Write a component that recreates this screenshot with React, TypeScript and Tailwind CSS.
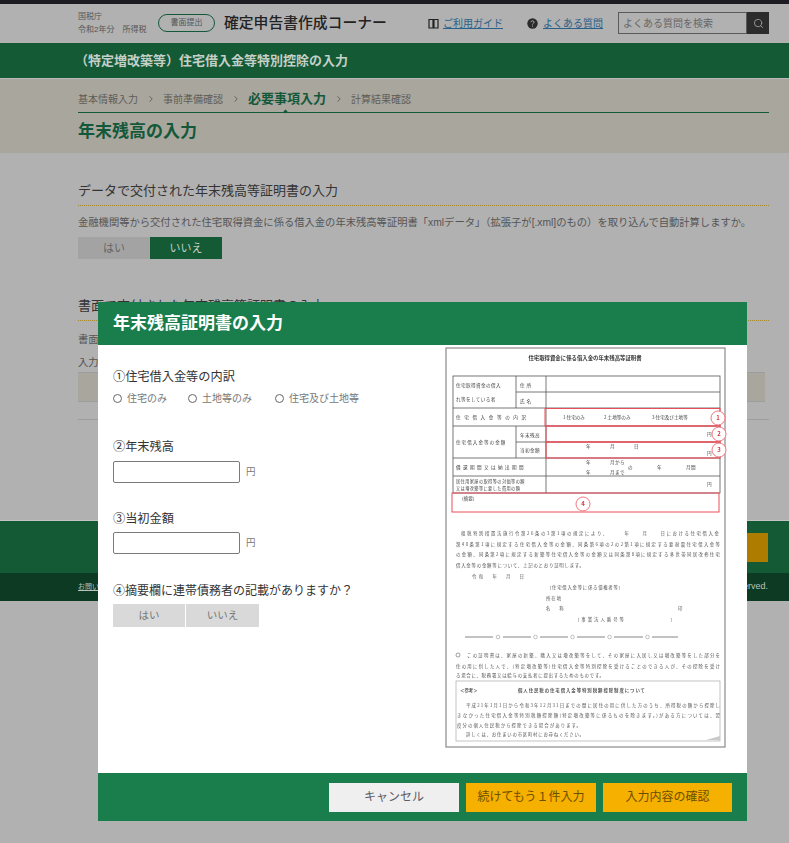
import React from 'react';
import { Search, ChevronRight } from 'lucide-react';

const Crumb = ({ label, active }: { label: string; active?: boolean }) => (
  <span className={active ? 'text-[13px] font-bold text-[#14583a]' : 'text-[10px] text-[#5f5d57]'}>{label}</span>
);

const Arrow = () => <ChevronRight size={10} className="mx-[1.5px] text-[#555]" />;

// the certificate sample on the right of the dialog
function CertificateSample() {
  const cell = { fontSize: 4.6, fill: '#444', letterSpacing: 0.4 };
  const body = { fontSize: 4.4, fill: '#555' };
  return (
    <svg width="285" height="404" viewBox="445 347 285 404" className="shrink-0">
      <defs>
        <filter id="soft"><feGaussianBlur stdDeviation="0.3" /></filter>
      </defs>
      <g filter="url(#soft)" style={{ fontFamily: '"Noto Sans CJK JP", sans-serif' }}>
        <rect x="446" y="348" width="279" height="399" fill="#fff" stroke="#8a8a8a" strokeWidth="1.2" />
        <text x="585" y="360" textAnchor="middle" fontSize="5.4" fontWeight="700" fill="#333">住宅取得資金に係る借入金の年末残高等証明書</text>

        {/* table */}
        <g stroke="#555" strokeWidth="0.8" fill="none">
          <rect x="453" y="376" width="267" height="117" />
          <path d="M453 408H720M453 426H720M516 392H720M516 442H720M453 458H720M453 476H720" />
          <path d="M516 376V408M516 426V458M546 376V493" />
        </g>
        <text x="456" y="387" {...cell}>住宅取得資金の借入</text>
        <text x="456" y="401" {...cell}>れ等をしている者</text>
        <text x="520" y="387" {...cell}>住 所</text>
        <text x="520" y="403" {...cell}>氏 名</text>
        <text x="456" y="419" {...cell} letterSpacing="3.6">住宅借入金等の内訳</text>
        <text x="563" y="419" {...cell} letterSpacing="0">1 住宅のみ</text>
        <text x="604" y="419" {...cell} letterSpacing="0">2 土地等のみ</text>
        <text x="652" y="419" {...cell} letterSpacing="0">3 住宅及び土地等</text>
        <text x="456" y="444" {...cell} letterSpacing="1">住宅借入金等の金額</text>
        <text x="520" y="437" {...cell}>年末残高</text>
        <text x="520" y="452" {...cell}>当初金額</text>
        <text x="586" y="448" {...cell}>年</text>
        <text x="610" y="448" {...cell}>月</text>
        <text x="634" y="448" {...cell}>日</text>
        <text x="707" y="436" {...cell}>円</text>
        <text x="707" y="455" {...cell}>円</text>
        <text x="456" y="469" {...cell} letterSpacing="2.4">償還期間又は納出期間</text>
        <text x="586" y="464" {...cell}>年</text>
        <text x="610" y="464" {...cell}>月から</text>
        <text x="586" y="474" {...cell}>年</text>
        <text x="610" y="474" {...cell}>月まで</text>
        <text x="628" y="469" {...cell}>の</text>
        <text x="657" y="469" {...cell}>年</text>
        <text x="686" y="469" {...cell}>月間</text>
        <text x="456" y="483" {...cell} fontSize="4.2">居住用家屋の取得等の対価等の額</text>
        <text x="456" y="490" {...cell} fontSize="4.2">又は増改築等に要した費用の額</text>
        <text x="707" y="486" {...cell}>円</text>
        <text x="459" y="500" {...cell} letterSpacing="0">（摘要）</text>

        {/* red marks */}
        <g fill="none" stroke="#e8505a" strokeWidth="1">
          <rect x="545" y="408.5" width="175" height="17.5" />
          <rect x="546" y="426" width="174" height="16" />
          <rect x="546" y="442" width="174" height="16" strokeWidth="1.2" />
          <rect x="452" y="493" width="267" height="19" />
        </g>
        {[
          [718, 418, '1'],
          [719, 434, '2'],
          [719, 450, '3'],
          [583, 504, '4'],
        ].map(([x, y, n]) => (
          <g key={n as string}>
            <circle cx={x as number} cy={y as number} r="7" fill="#fff" stroke="#ee6a72" strokeWidth="0.9" />
            <text x={x as number} y={(y as number) + 2} textAnchor="middle" fontSize="6" fontWeight="700" fill="#d63b46">{n}</text>
          </g>
        ))}

        {/* statement */}
        <text x="461" y="535" {...body} textLength="258">租税特別措置法施行令第26条の3第1項の規定により、　　　年　　月　　日における住宅借入金</text>
        <text x="456" y="546" {...body} textLength="264">第40条第1項に規定する住宅借入金等の金額、同条第6項の2の2第1項に規定する要耐震住宅借入金等</text>
        <text x="456" y="556" {...body} textLength="264">の金額、同条第2項に規定する新築等住宅借入金等の金額又は同条第8項に規定する多世帯同居改修住宅</text>
        <text x="456" y="567" {...body} textLength="128">借入金等の金額等について、上記のとおり証明します。</text>
        <text x="472" y="578" {...body} textLength="52">令和　年　月　日</text>
        <text x="547" y="589" {...body} textLength="76">（住宅借入金等に係る債権者等）</text>
        <text x="546" y="600" {...body}>所 在 地</text>
        <text x="546" y="610" {...body}>名　　称</text>
        <text x="678" y="610" {...body}>印</text>
        <text x="575" y="621" {...body} textLength="100">（事業法人番号等　　　　　　　）</text>

        <path d="M465 637H493M503 637H531M540 637H568M577 637H605M614 637H643M652 637H678" stroke="#666" strokeWidth="0.8" />
        {[498, 535.5, 572.5, 609.5, 647.5].map((x) => (
          <circle key={x} cx={x} cy="637" r="1.8" fill="none" stroke="#999" strokeWidth="0.6" />
        ))}

        <circle cx="458" cy="655" r="2" fill="none" stroke="#777" strokeWidth="0.7" />
        <text x="467" y="657" {...body} textLength="253">この証明書は、家屋の新築、購入又は増改築等をして、その家屋に入居し又は増改築等をした部分を</text>
        <text x="456" y="668" {...body} textLength="264">住の用に供した人で、(特定増改築等)住宅借入金等特別控除を受けることのできる人が、その控除を受け</text>
        <text x="456" y="677" {...body} textLength="148">る場合に、税務署又は給与の支払者に提出するためのものです。</text>

        <rect x="456" y="681" width="264" height="60" fill="none" stroke="#aaa" strokeWidth="0.7" />
        <text x="460" y="692" {...body} fontWeight="700">＜参考＞</text>
        <text x="518" y="692" {...body} fontWeight="700" textLength="127">個人住民税の住宅借入金等特別税額控除制度について</text>
        <text x="466" y="707" {...body} textLength="254">平成21年1月1日から令和3年12月31日までの間に居住の用に供した方のうち、所得税の額から控除し</text>
        <text x="457" y="717" {...body} textLength="263">きなかった住宅借入金等特別税額控除額(特定増改築等に係るものを除きます。)がある方については、翌</text>
        <text x="457" y="727" {...body} textLength="124">度分の個人住民税から控除できる場合があります。</text>
        <text x="466" y="736" {...body} textLength="118">詳しくは、お住まいの市区町村にお尋ねください。</text>
        <path d="M706 740L720 736V740Z" fill="#c9c9c9" />
      </g>
    </svg>
  );
}

export default function App() {
  return (
    <div
      className="relative h-[843px] w-[789px] overflow-hidden bg-[#b1b1b1] text-[#3a3a3a]"
      style={{ fontFamily: '"Liberation Sans", "Noto Sans CJK JP", sans-serif' }}
    >
      <div className="h-1 bg-[#1c1c22]" />

      {/* site header */}
      <header className="flex h-[38px] items-center whitespace-nowrap pl-[78px]">
        <div className="w-[80px] shrink-0 text-[8px] leading-[13px] text-[#555]">
          <div>国税庁</div>
          <div>令和2年分　所得税</div>
        </div>
        <span className="flex h-[18px] w-[57px] shrink-0 items-center justify-center rounded-full border border-[#14583a] text-[8px] text-[#555]">書面提出</span>
        <span className="ml-[9px] w-[163px] shrink-0 text-[14.8px] font-medium text-[#222]">確定申告書作成コーナー</span>
        <svg width="11" height="11" viewBox="0 0 11 11" className="ml-[41px] shrink-0">
          <path d="M1 1.5H5V10H1ZM6 1.5H10V10H6Z" fill="none" stroke="#222" strokeWidth="1.2" />
        </svg>
        <a className="ml-[4px] w-[60px] shrink-0 text-[10px] text-[#29618a] underline">ご利用ガイド</a>
        <svg width="11" height="11" viewBox="0 0 11 11" className="ml-[24px] shrink-0">
          <circle cx="5.5" cy="5.5" r="5.2" fill="#2a2a2a" />
          <path d="M3.9 4.2C3.9 2.4 7.1 2.4 7.1 4.2C7.1 5.4 5.5 5.3 5.5 6.6M5.5 7.6V8.7" fill="none" stroke="#aaa" strokeWidth="1" />
        </svg>
        <a className="ml-[5px] w-[60px] shrink-0 text-[10px] text-[#29618a] underline">よくある質問</a>
        <div className="ml-[15px] flex h-[22px] w-[151px] shrink-0">
          <div className="flex flex-1 items-center border border-[#5a5a5a] pl-1 text-[10px] text-[#666]">よくある質問を検索</div>
          <div className="flex w-[22px] items-center justify-center bg-[#2c2c2c]">
            <Search size={11} className="text-[#999]" />
          </div>
        </div>
      </header>

      <div className="mt-px flex h-[36px] items-center border-b border-[#b9b9b9] bg-[#135a35] pl-[75px] text-[13px] font-bold text-[#c4cfc8]">（特定増改築等）住宅借入金等特別控除の入力</div>

      {/* steps */}
      <div className="h-[74px] bg-[#a9a69d] px-[78px] pt-[7px]">
        <div className="flex h-[26px] items-center gap-[6px]">
          <Crumb label="基本情報入力" />
          <Arrow />
          <Crumb label="事前準備確認" />
          <Arrow />
          <Crumb label="必要事項入力" active />
          <Arrow />
          <Crumb label="計算結果確認" />
        </div>
        <div className="relative h-px w-[691px] bg-[#14583a]">
          <span className="absolute -top-[2px] left-[206px] size-[3px] rotate-45 bg-[#14583a]" />
        </div>
        <h1 className="mt-[7px] text-[17px] font-bold leading-[24px] text-[#14583a]">年末残高の入力</h1>
      </div>

      {/* page behind the dialog */}
      <main className="ml-[78px] w-[691px]">
        <h2 className="mt-[28px] h-[25px] border-b border-dotted border-[#a88a2c] text-[13px] leading-[20px] text-[#333]">データで交付された年末残高等証明書の入力</h2>
        <p className="mt-[10px] whitespace-nowrap text-[10.3px] leading-[14px] text-[#555]">金融機関等から交付された住宅取得資金に係る借入金の年末残高等証明書「xmlデータ」（拡張子が[.xml]のもの）を取り込んで自動計算しますか。</p>
        <div className="mt-[7px] flex h-[22px] text-[11px]">
          <span className="flex w-[72px] items-center justify-center bg-[#a3a3a3] text-[#666]">はい</span>
          <span className="flex w-[72px] items-center justify-center bg-[#135a35] text-[#c4cfc8]">いいえ</span>
        </div>
        <h2 className="mt-[37px] h-[25px] border-b border-dotted border-[#a88a2c] text-[13px] leading-[20px] text-[#333]">書面で交付された年末残高等証明書の入力</h2>
        <p className="mt-[12px] text-[10.3px] leading-[14px] text-[#555]">書面</p>
        <p className="mt-[9px] text-[10.3px] leading-[14px] text-[#555]">入力</p>
        <div className="mt-[2px] h-[30px] w-[687px] border-y border-[#9d9d9d] bg-[#a9a69d]" />
        <div className="mt-[17px] h-px bg-[#9d9d9d]" />
      </main>

      {/* footer */}
      <footer className="mt-[100px] border-t border-[#c4c4c4]">
        <div className="flex h-[52px] items-center justify-end bg-[#135a35] pr-[21px]">
          <span className="h-[29px] w-[60px] bg-[#ae7d00]" />
        </div>
        <div className="flex h-[28px] items-center justify-between bg-[#0c3a22] pl-[78px] pr-[21px] text-[7px] text-[#b9c4bd]">
          <a className="underline">お問い</a>
          <span className="text-[9px]">All Rights Reserved.</span>
        </div>
      </footer>

      {/* dialog */}
      <section className="absolute left-[98px] top-[302px] flex h-[519px] w-[649px] flex-col bg-white">
        <div className="flex h-[43px] items-center bg-[#1a7e4c] pl-[15px] text-[17px] font-bold text-white">年末残高証明書の入力</div>

        <div className="flex flex-1">
          <div className="w-[347px] pl-[15px] pt-[24px]">
            <div className="text-[12.2px] leading-[16px] text-[#333]">①住宅借入金等の内訳</div>
            <div className="mt-[6px] flex h-[14px] items-center text-[10px] text-[#777]">
              <span className="size-[9px] rounded-full border border-[#666]" />
              <span className="ml-[5px] w-[61px]">住宅のみ</span>
              <span className="size-[9px] rounded-full border border-[#666]" />
              <span className="ml-[5px] w-[73px]">土地等のみ</span>
              <span className="size-[9px] rounded-full border border-[#666]" />
              <span className="ml-[5px]">住宅及び土地等</span>
            </div>

            <div className="mt-[34px] text-[12.2px] leading-[16px] text-[#333]">②年末残高</div>
            <div className="mt-[6px] flex items-center">
              <div className="h-[22px] w-[127px] rounded-[2px] border border-[#7a7a7a] bg-white" />
              <span className="ml-[6px] text-[9.5px] text-[#777]">円</span>
            </div>

            <div className="mt-[28px] text-[12.2px] leading-[16px] text-[#333]">③当初金額</div>
            <div className="mt-[5px] flex items-center">
              <div className="h-[22px] w-[127px] rounded-[2px] border border-[#7a7a7a] bg-white" />
              <span className="ml-[6px] text-[9.5px] text-[#777]">円</span>
            </div>

            <div className="mt-[29px] text-[12px] leading-[16px] text-[#333]">④摘要欄に連帯債務者の記載がありますか？</div>
            <div className="mt-[5px] flex h-[23px] gap-px text-[10.5px] text-[#777]">
              <span className="flex w-[72px] items-center justify-center bg-[#d9d9d9]">はい</span>
              <span className="flex w-[73px] items-center justify-center bg-[#d9d9d9]">いいえ</span>
            </div>
          </div>
          <div className="pt-[2px]">
            <CertificateSample />
          </div>
        </div>

        <div className="flex h-[48px] items-center justify-end gap-[7px] bg-[#1a7e4c] pr-[15px] text-[12px]">
          <span className="flex h-[29px] w-[130px] items-center justify-center bg-[#efefef] text-[#5b5b66]">キャンセル</span>
          <span className="flex h-[29px] w-[130px] items-center justify-center bg-[#f5b000] text-[#6b4f00]">続けてもう１件入力</span>
          <span className="flex h-[29px] w-[129px] items-center justify-center bg-[#f5b000] text-[#6b4f00]">入力内容の確認</span>
        </div>
      </section>
    </div>
  );
}
